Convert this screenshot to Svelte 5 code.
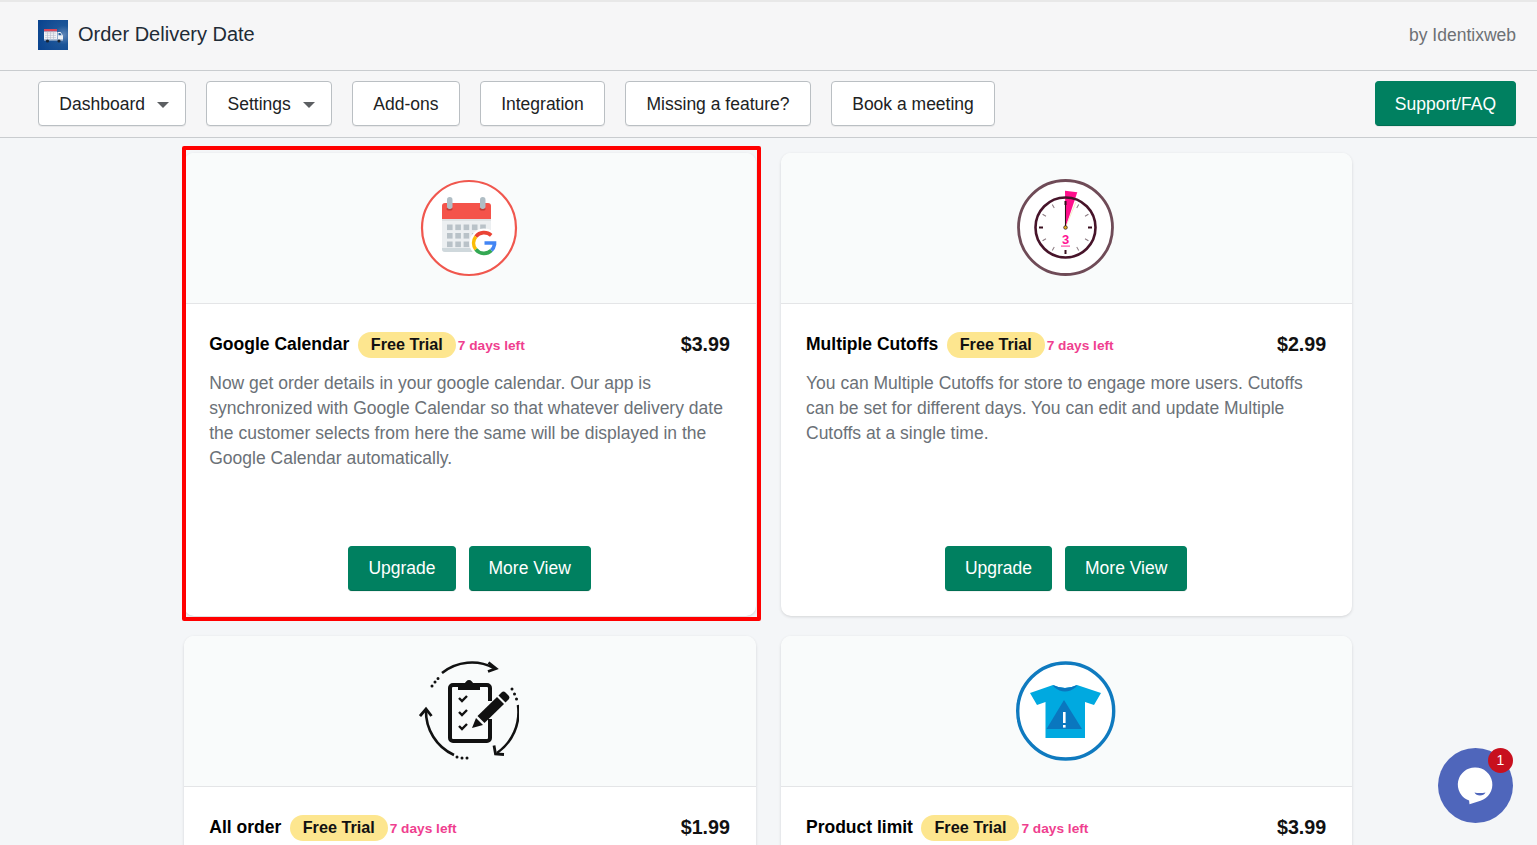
<script>
  const nav = [
    { label: 'Dashboard', caret: true },
    { label: 'Settings', caret: true },
    { label: 'Add-ons' },
    { label: 'Integration' },
    { label: 'Missing a feature?' },
    { label: 'Book a meeting' }
  ];

  const cards = [
    {
      key: 'calendar',
      title: 'Google Calendar',
      price: '$3.99',
      selected: true,
      text: 'Now get order details in your google calendar. Our app is synchronized with Google Calendar so that whatever delivery date the customer selects from here the same will be displayed in the Google Calendar automatically.'
    },
    {
      key: 'cutoffs',
      title: 'Multiple Cutoffs',
      price: '$2.99',
      text: 'You can Multiple Cutoffs for store to engage more users. Cutoffs can be set for different days. You can edit and update Multiple Cutoffs at a single time.'
    },
    // the lower row runs past the fold, only its heading shows
    { key: 'order', title: 'All order', price: '$1.99' },
    { key: 'product', title: 'Product limit', price: '$3.99' }
  ];

  const gridRows = [46.5, 55, 63.5];
  const gridCols = [28, 36.3, 44.6, 52.9, 61.2];
  const ticks = [30, 60, 90, 120, 150, 180, 210, 240, 270, 300, 330, 360];
</script>

<div class="page">
  <header class="top">
    <div class="brand">
      <svg class="logo" viewBox="0 0 30 30" aria-hidden="true">
        <defs>
          <radialGradient id="logoBg" cx="0.85" cy="0.5" r="0.9">
            <stop offset="0" stop-color="#5f86b8" />
            <stop offset="0.35" stop-color="#1c5598" />
            <stop offset="1" stop-color="#0b448f" />
          </radialGradient>
        </defs>
        <rect width="30" height="30" fill="url(#logoBg)" />
        <rect x="6" y="9" width="13" height="2.5" fill="#d9465a" />
        <rect x="6" y="11.5" width="13" height="8" fill="#f2f2f6" />
        <path d="M7 13h11M7 15.4h11M7 17.6h11M9.5 11.5v8M12.5 11.5v8M15.5 11.5v8" stroke="#b6bccb" stroke-width="0.6" />
        <path d="M19.5 12h3l2.5 3.5v4h-5.500z" fill="#eef1f6" />
        <path d="M20.5 13h1.8l1.500 2.300h-3.300z" fill="#2a5f9e" />
        <rect x="6" y="19.5" width="19" height="1" fill="#cfd5e0" />
        <circle cx="9.5" cy="21" r="1.6" fill="#1c2430" />
        <circle cx="21" cy="21" r="1.6" fill="#1c2430" />
      </svg>
      <span class="app-name">Order Delivery Date</span>
    </div>
    <span class="by">by Identixweb</span>
  </header>

  <nav class="nav">
    <div class="nav-left">
      {#each nav as item}
        <button class="btn nav-btn" class:has-caret={item.caret}>
          {item.label}
          {#if item.caret}<span class="caret"></span>{/if}
        </button>
      {/each}
    </div>
    <button class="btn nav-btn primary">Support/FAQ</button>
  </nav>

  <main class="cards">
    {#each cards as card}
      <section class="card">
        {#if card.selected}<div class="selected"></div>{/if}
        <div class="card-img">
          <svg class="feature-icon" viewBox="0 0 100 100" aria-hidden="true">
            {#if card.key === 'calendar'}
              <circle cx="50" cy="50" r="47" fill="#fff" stroke="#f0574e" stroke-width="2.2" />
              <path d="M23 42h49v29a3 3 0 0 1-3 3H26a3 3 0 0 1-3-3z" fill="#eceff1" />
              <path d="M23 70h49v1a3 3 0 0 1-3 3H26a3 3 0 0 1-3-3z" fill="#cfd8dc" />
              <path d="M26 25h43a3 3 0 0 1 3 3v13H23V28a3 3 0 0 1 3-3z" fill="#f4534a" />
              <rect x="23" y="41" width="49" height="2" fill="#dde1e3" />
              <ellipse cx="30.500" cy="31" rx="3" ry="1.500" fill="#c23c35" />
              <ellipse cx="63.500" cy="31" rx="3" ry="1.500" fill="#c23c35" />
              <rect x="28" y="19" width="5.500" height="12" rx="2.700" fill="#b0bec5" />
              <rect x="61" y="19" width="5.500" height="12" rx="2.700" fill="#b0bec5" />
              {#each gridRows as y}
                {#each gridCols as x}
                  <rect {x} {y} width="5.6" height="5.6" fill="#b9c2c8" />
                {/each}
              {/each}
              <circle cx="65" cy="65" r="14.5" fill="#fff" />
              <path d="M56.8 58.6A10.5 10.5 0 0 1 72.2 57.4" fill="none" stroke="#ea4335" stroke-width="3.6" />
              <path d="M56.8 58.6A10.5 10.5 0 0 0 56.8 71.4" fill="none" stroke="#fbbc05" stroke-width="3.6" />
              <path d="M56.8 71.4A10.5 10.5 0 0 0 72.4 72.4" fill="none" stroke="#34a853" stroke-width="3.6" />
              <path d="M65.5 65h10v1.500a10.500 10.500 0 0 1-3.100 5.900" fill="none" stroke="#4285f4" stroke-width="3.6" />
            {:else if card.key === 'cutoffs'}
              <circle cx="49.5" cy="49.5" r="47" fill="#fff" stroke="#6f4b57" stroke-width="2.8" />
              <circle cx="49.5" cy="49.5" r="30" fill="#fff" />
              <path d="M49 12.700 61.300 14.300 49.500 49.500z" fill="#ff0f8c" />
              <circle cx="49.5" cy="49.5" r="30" fill="none" stroke="#47142a" stroke-width="2.6" />
              {#each ticks as a}
                <rect
                  x={a % 90 === 0 ? 48.5 : 49}
                  y="23"
                  width={a % 90 === 0 ? 2 : 1}
                  height="4"
                  fill={a % 90 === 0 ? '#3a1020' : '#8a7a80'}
                  transform="rotate({a} 49.5 49.5)"
                />
              {/each}
              <path d="M49.500 49.500 60 24" stroke="#f2e7bb" stroke-width="0.8" />
              <path d="M49.500 49.500V23" stroke="#2b1016" stroke-width="1.100" />
              <circle cx="49.5" cy="49.5" r="1.8" fill="#e0b020" stroke="#2b1016" stroke-width="0.7" />
              <text class="clock-three" x="49.5" y="66" text-anchor="middle">3</text>
              <rect x="45" y="67.5" width="9" height="1.2" fill="#ff4aa8" />
            {:else if card.key === 'order'}
              <path d="M23 12A48 48 0 0 1 75 7" fill="none" stroke="#111" stroke-width="2.600" />
              <path d="M69.500 1.500 77 7.500 69 10.500" fill="none" stroke="#111" stroke-width="2.800" />
              <path d="M99 44A50 50 0 0 1 78 92" fill="none" stroke="#111" stroke-width="2.600" />
              <path d="M75 84.500 76.500 93 85 93.500" fill="none" stroke="#111" stroke-width="2.800" />
              <path d="M35 94A48 48 0 0 1 7 49" fill="none" stroke="#111" stroke-width="2.600" />
              <path d="M1 55 7 48 12.500 55" fill="none" stroke="#111" stroke-width="2.800" />
              <path d="M13 25h.01M16 21h.01M19 17.500h.01" stroke="#111" stroke-width="3" stroke-linecap="round" />
              <path d="M93 28h.01M95.500 33h.01M97.500 38h.01" stroke="#111" stroke-width="3" stroke-linecap="round" />
              <path d="M38 96h.01M43 97h.01M48 97h.01" stroke="#111" stroke-width="3" stroke-linecap="round" />
              <path d="M71 40V27a3 3 0 0 0-3-3H34a3 3 0 0 0-3 3v50a3 3 0 0 0 3 3h34a3 3 0 0 0 3-3V58" fill="none" stroke="#111" stroke-width="4" />
              <path d="M39 29v-5h6c1-3 3-5 5-5s4 2 5 5h6v5z" fill="#111" />
              <path d="M40 37l3 3 5-5M40 51l3 3 5-5M40 65l3 3 5-5" fill="none" stroke="#111" stroke-width="2.400" />
              <path d="M58.500 55 78 36l7 7-19.500 19z" fill="#111" />
              <path d="M79.500 34.500l3-3a3 3 0 0 1 4 0l3 3a3 3 0 0 1 0 4l-3 3z" fill="#111" />
              <path d="M57 57l7 7-11 3z" fill="#111" />
            {:else}
              <circle cx="49.7" cy="50" r="48" fill="#fff" stroke="#0f7abf" stroke-width="3.400" />
              <path d="M37 24 14 32 21 44 29.500 41V77H69V41L78 44 85 32 61 24Q49 30 37 24z" fill="#00a9e0" />
              <path d="M37 24Q49 30 61 24L60 26Q49 35 38 26z" fill="#0a77bf" />
              <path d="M48 39 30.500 68H66z" fill="#0a77bf" />
              <rect x="47" y="51" width="2.600" height="11" fill="#fff" />
              <rect x="47" y="64" width="2.600" height="2.600" fill="#fff" />
            {/if}
          </svg>
        </div>
        <div class="card-body">
          <div class="title-row">
            <h2>{card.title}</h2>
            <span class="pill">Free Trial</span>
            <span class="days">7 days left</span>
            <span class="price">{card.price}</span>
          </div>
          {#if card.text}
            <p>{card.text}</p>
            <div class="actions">
              <button class="btn primary">Upgrade</button>
              <button class="btn primary">More View</button>
            </div>
          {/if}
        </div>
      </section>
    {/each}
  </main>

  <div class="chat">
    <svg viewBox="0 0 75 75" aria-hidden="true">
      <circle cx="37.500" cy="37.500" r="37.500" fill="#4f66bb" />
      <path d="M37.500 19.500a17 17 0 0 1 5 33.200c-3.500 1.200-7.500 2.400-11 3.500l-.4-3.700a17 17 0 0 1 6.400-33z" fill="#fff" />
      <path d="M36.500 44.500c3 .8 8 .8 11-.1-1.500 4-9.500 4-11 .1z" fill="#4f66bb" />
    </svg>
    <span class="badge">1</span>
  </div>
</div>

<style>
  :global(body) {
    font-family: 'Liberation Sans', Arial, sans-serif;
    background: #f4f6f8;
    color: #212b36;
    margin: 0;
    overflow: hidden;
  }
  .page {
    height: 845px;
    overflow: hidden;
  }
  .top {
    height: 70px;
    box-shadow: inset 0 2px 0 #e8e8e8;
    border-bottom: 1px solid #c9cccf;
    background: #f6f6f7;
    display: flex;
    align-items: center;
    justify-content: space-between;
    padding: 0 21px 0 38px;
  }
  .brand {
    display: flex;
    align-items: center;
    gap: 10px;
  }
  .logo {
    width: 30px;
    height: 30px;
    display: block;
  }
  .app-name {
    font-size: 20px;
    margin-bottom: 2px;
  }
  .by {
    font-size: 17.5px;
    color: #6d7175;
  }
  .nav {
    height: 67px;
    box-sizing: border-box;
    border-bottom: 1px solid #c9cccf;
    background: #f6f6f7;
    display: flex;
    align-items: flex-start;
    justify-content: space-between;
    padding: 10px 21px 0 38px;
  }
  .nav-left {
    display: flex;
    gap: 20px;
  }
  .btn {
    height: 45px;
    box-sizing: border-box;
    padding: 0 19px;
    border: 1px solid #babfc3;
    border-radius: 4px;
    background: #fff;
    color: #202223;
    font-family: inherit;
    font-size: 17.5px;
    display: inline-flex;
    align-items: center;
    box-shadow: 0 1px 0 rgba(0, 0, 0, 0.05);
  }
  .nav-btn {
    padding: 2px 20.35px 0;
  }
  .nav-btn.has-caret {
    padding-right: 16.2px;
  }
  .nav-btn.primary {
    padding: 2px 19px 0;
  }
  .btn.primary {
    background: #008060;
    border-color: #008060;
    border-bottom-color: #006e52;
    color: #fff;
  }
  .caret {
    width: 0;
    height: 0;
    margin-left: 12px;
    border-left: 6px solid transparent;
    border-right: 6px solid transparent;
    border-top: 6px solid #5c5f62;
  }
  .cards {
    width: 1168px;
    margin: 15px 0 0 184.25px;
    display: grid;
    grid-template-columns: 571.75px 571.25px;
    column-gap: 25px;
    row-gap: 20px;
  }
  .card {
    position: relative;
    height: 463px;
    box-sizing: border-box;
    background: #fff;
    border-radius: 10px;
    box-shadow: 0 1px 3px rgba(63, 63, 68, 0.18);
    display: flex;
    flex-direction: column;
  }
  .selected {
    position: absolute;
    left: -2.25px;
    top: -7px;
    width: 579px;
    height: 475px;
    box-sizing: border-box;
    border: 4px solid #ff0000;
    border-radius: 2px;
    pointer-events: none;
  }
  .card-img {
    height: 151px;
    box-sizing: border-box;
    flex: none;
    background: #f9fbfb;
    border-radius: 10px 10px 0 0;
    border-bottom: 1px solid #e4e5e7;
    display: flex;
    justify-content: center;
    padding-top: 25px;
  }
  .feature-icon {
    width: 100px;
    height: 100px;
    display: block;
    margin-right: 2px;
  }
  .clock-three {
    font-family: 'Liberation Sans', sans-serif;
    font-weight: 700;
    font-size: 13px;
    fill: #ff1493;
  }
  .card-body {
    flex: 1;
    display: flex;
    flex-direction: column;
    padding: 28px 26px 25px 25px;
  }
  .title-row {
    display: flex;
    align-items: center;
    height: 26px;
  }
  h2 {
    margin: 0 8.5px 2px 0;
    font-size: 17.5px;
    font-weight: 700;
    color: #000;
  }
  .pill {
    height: 26px;
    line-height: 25px;
    padding: 0 13px;
    border-radius: 13px;
    background: #fde68f;
    color: #111;
    font-size: 16.2px;
    font-weight: 700;
  }
  .days {
    margin-left: 2px;
    font-size: 13.7px;
    font-weight: 700;
    color: #ef3f8f;
  }
  .price {
    margin: 0 0 2px auto;
    font-size: 19.7px;
    font-weight: 700;
    color: #111;
  }
  p {
    margin: 13px 0 0;
    font-size: 17.5px;
    line-height: 25px;
    color: #6b7177;
  }
  .actions {
    margin-top: auto;
    display: flex;
    justify-content: center;
    gap: 13px;
  }
  .chat {
    position: fixed;
    left: 1438px;
    top: 748px;
    width: 75px;
    height: 75px;
  }
  .chat svg {
    width: 75px;
    height: 75px;
    display: block;
  }
  .badge {
    position: absolute;
    top: 0;
    right: 0;
    width: 25px;
    height: 25px;
    border-radius: 50%;
    background: #c8101e;
    color: #fff;
    font-size: 14px;
    line-height: 25px;
    text-align: center;
  }
</style>
